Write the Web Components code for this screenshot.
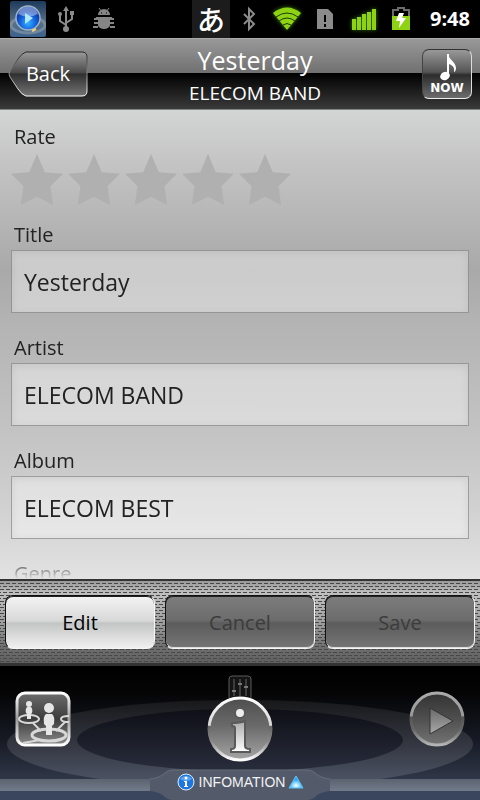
<!DOCTYPE html>
<html lang="en">
<head>
<meta charset="utf-8">
<meta name="viewport" content="width=device-width, initial-scale=1">
<title>Track information</title>
<style>
  html,
  body {
    height: 100%;
    margin: 0;
  }

  body {
    display: flex;
    flex-direction: column;
    background: #000;
    color: #222;
    font-family: "Open Sans", "Noto Sans", "Noto Sans CJK JP", sans-serif;
  }

  track-form {
    flex: 1;
    min-height: 0;
  }
</style>
</head>
<body>
  <status-bar time="9:48"></status-bar>
  <title-bar>
    <span slot="title">Yesterday</span>
    <span slot="subtitle">ELECOM BAND</span>
  </title-bar>
  <track-form>
    <star-rating max="5">Rate</star-rating>
    <text-field value="Yesterday">Title</text-field>
    <text-field value="ELECOM BAND">Artist</text-field>
    <text-field value="ELECOM BEST">Album</text-field>
    <text-field value="">Genre</text-field>
  </track-form>
  <action-bar>
    <push-button>Edit</push-button>
    <push-button disabled>Cancel</push-button>
    <push-button disabled>Save</push-button>
  </action-bar>
  <player-dock>INFOMATION</player-dock>

<script>
/**
 * Creates a template element from a string.
 *
 * @param {string} html - The markup and styles.
 * @returns {HTMLTemplateElement} - The template.
 */
const createTemplate = (html) => {
  const template = document.createElement('template')
  template.innerHTML = html
  return template
}

const statusTemplate = createTemplate(`
  <div class="group">
    <svg width="36" height="36" viewBox="0 0 36 36">
      <defs>
        <linearGradient id="tile" x2="0" y2="1"><stop stop-color="#1d3a5c"/><stop offset=".6" stop-color="#5a7186"/><stop offset="1" stop-color="#39618c"/></linearGradient>
        <radialGradient id="ball" cx=".5" cy=".7"><stop stop-color="#35b4ff"/><stop offset=".6" stop-color="#1668e0"/><stop offset="1" stop-color="#0d3fae"/></radialGradient>
      </defs>
      <rect width="36" height="36" rx="2" fill="url(#tile)"/>
      <ellipse cx="18" cy="24" rx="17" ry="8" fill="none" stroke="#9aa8b2" stroke-width="3" opacity=".5"/>
      <circle cx="18" cy="17" r="12" fill="url(#ball)" stroke="#9db4c8" stroke-width="1.500"/>
      <path d="M8 13a10.500 10.500 0 0 1 20 0q-10 5-20 0z" fill="#fff" opacity=".4"/>
      <path d="M15 12l8 5-8 6z" fill="#b4e6ff"/>
      <path d="M22 30l4-2" stroke="#f0cf80" stroke-width="2"/>
    </svg>
    <svg width="32" height="32" viewBox="0 0 32 32" fill="none" stroke="#8b8b8b" stroke-width="2">
      <path d="M16 6v20M16 22l-6-4v-6M16 20l6-4v-5"/>
      <g fill="#8b8b8b" stroke="none"><path d="M16 3l3 5h-6z"/><circle cx="16" cy="26" r="3"/><circle cx="10" cy="11" r="2"/><path d="M20 8h4v4h-4z"/></g>
    </svg>
    <svg width="36" height="32" viewBox="0 0 36 32" fill="#858585">
      <path d="M12 12a6 6 0 0 1 12 0z"/>
      <path d="M13 5l3 4M23 5l-3 4" stroke="#858585"/>
      <path d="M8 16h3v-2M8 20h4M8 25v-1h4M28 16h-3v-2M28 20h-4M28 25v-1h-4" fill="none" stroke="#858585" stroke-width="2"/>
      <path d="M12 14h12v8a6 4 0 0 1-12 0z"/>
      <path d="M15 10h1M20 10h1" stroke="#000"/>
    </svg>
  </div>
  <div class="group">
    <span class="ime" lang="ja">あ</span>
    <svg width="30" height="32" viewBox="0 0 30 32" fill="none" stroke="#8b8b8b" stroke-width="2"><path d="M10 11l10 10-5 5V6l5 5-10 10"/></svg>
    <svg class="glow" width="38" height="32" viewBox="0 0 38 32">
      <path d="M19 27L5 10q14-11 28 0z" fill="#8ed313"/>
      <path d="M8 14q11-8 22 0M11 18q8-6 16 0M15 22q4-3 8 0" fill="none" stroke="#1e3605"/>
    </svg>
    <svg width="30" height="32" viewBox="0 0 30 32"><path d="M7 6h11l5 5v15H7z" fill="#8b8b8b"/><path d="M15 12v7M15 21v3" stroke="#000" stroke-width="2"/></svg>
    <svg class="glow" width="40" height="32" viewBox="0 0 40 32" fill="#8ed313"><path d="M8 16h4v11H8zM13 14h4v13h-4zM18 11h4v16h-4zM23 9h4v18h-4zM28 6h4v21h-4z"/></svg>
    <svg width="26" height="32" viewBox="0 0 26 32">
      <path d="M5 14V7h5V5h6v2h5v7" fill="none" stroke="#6b6b6b" stroke-width="2"/>
      <path d="M4 13h18v14H4z" fill="#8ed313"/>
      <path d="M11 10h5l-2 5h4l-7 10 1-7H8z" fill="#fff"/>
    </svg>
    <time></time>
  </div>
  <style>
    :host {
      display: flex;
      justify-content: space-between;
      height: 38px;
      padding: 0 10px;
      background: #000;
      color: #fff;
    }

    .group {
      display: flex;
      align-items: center;
      gap: 4px;
    }

    .ime {
      width: 38px;
      background: #1c1c1c;
      font: 500 28px/38px "Noto Sans CJK JP", sans-serif;
      text-align: center;
    }

    .glow {
      filter: drop-shadow(0 0 2px #3d7a00);
    }

    time {
      min-width: 52px;
      font-size: 20px;
      font-weight: bold;
      line-height: 38px;
      text-align: right;
    }
  </style>
`)

// Define the custom element.
customElements.define('status-bar',
/** Status bar class with system icons and the clock. */
  class extends HTMLElement {
    /**
     * Constructor that attaches the shadow root.
     */
    constructor () {
      super()
      this.attachShadow({ mode: 'open' })
      this.shadowRoot.appendChild(statusTemplate.content.cloneNode(true))
      this.shadowRoot.querySelector('time').textContent = this.getAttribute('time')
    }
  })

const titleTemplate = createTemplate(`
  <button class="back" type="button">
    <svg viewBox="0 0 80 46" width="80" height="46" aria-hidden="true">
      <defs>
        <linearGradient id="face" x2="0" y2="1"><stop stop-color="#9a9a9a"/><stop offset=".47" stop-color="#4a4a4a"/><stop offset=".5" stop-color="#303030"/><stop offset="1" stop-color="#747474"/></linearGradient>
        <linearGradient id="edge" x2="0" y2="1"><stop stop-color="#222"/><stop offset=".4" stop-color="#777"/><stop offset="1" stop-color="#fff"/></linearGradient>
      </defs>
      <path d="M18 1h56q5 0 5 5v34q0 5-5 5H18q-4-1-8-7L2 26q-2-3 0-6l8-12q4-6 8-7z" fill="url(#face)" stroke="url(#edge)"/>
    </svg>
    <span>Back</span>
  </button>
  <div class="heading">
    <h1><slot name="title"></slot></h1>
    <p><slot name="subtitle"></slot></p>
  </div>
  <button class="now" type="button">
    <svg viewBox="0 0 30 28" width="30" height="28" aria-hidden="true">
      <path d="M16 1c1 6 8 8 8 14 0 2-1 4-2 4 1-5-2-7-5-8v11z" fill="#fff"/>
      <path d="M16 1v21" stroke="#fff" stroke-width="2"/>
      <ellipse cx="13" cy="23" rx="5" ry="4" transform="rotate(-25 13 23)" fill="#fff"/>
    </svg>
    <span>NOW</span>
  </button>
  <style>
    :host {
      display: flex;
      align-items: center;
      height: 70px;
      padding: 0 8px;
      border-top: 1px solid #aaa;
      border-bottom: 1px solid #7e8282;
      background: linear-gradient(#999, #707070 34px, #000 34px, #0a0a0a 40px, #3a3a3a);
      color: #fff;
    }

    button {
      border: 0;
      padding: 0;
      color: inherit;
      font-family: inherit;
    }

    .back {
      display: grid;
      background: none;
      font-size: 20px;
      line-height: 46px;
    }

    .back > * {
      grid-area: 1 / 1;
    }

    .back span {
      text-align: center;
    }

    .heading {
      display: flex;
      flex: 1;
      flex-direction: column;
      gap: 2px;
      padding-top: 2px;
      text-align: center;
    }

    h1,
    p {
      margin: 0;
      font-weight: normal;
    }

    h1 {
      font-size: 25px;
      line-height: 34px;
    }

    p {
      font-size: 19px;
      line-height: 28px;
    }

    .now {
      display: flex;
      flex-direction: column;
      align-items: center;
      justify-content: center;
      width: 50px;
      height: 50px;
      border: 1px solid #ccc;
      border-color: #333 #ddd #eee #444;
      border-radius: 7px;
      background: linear-gradient(#999, #555 22px, #2c2c2c 25px, #6c6c6c);
      font: bold 12px/14px "DejaVu Sans", sans-serif;
    }
  </style>
`)

customElements.define('title-bar',
/** Title bar class with the back and now playing buttons. */
  class extends HTMLElement {
    /**
     * Constructor that attaches the shadow root.
     */
    constructor () {
      super()
      this.attachShadow({ mode: 'open' })
      this.shadowRoot.appendChild(titleTemplate.content.cloneNode(true))
    }
  })

const formTemplate = createTemplate(`
  <form><slot></slot></form>
  <style>
    :host {
      display: block;
      background: linear-gradient(#d3d5d4, #c3c3c3 12%, #b5b5b5 24%, #a9a9a9 34%, #b4b4b4 46%, #c2c2c2 67%, #d0d0d0 84%, #e2e2e2);
    }

    form {
      box-sizing: border-box;
      height: 100%;
      overflow: hidden;
      padding: 14px 11px 0;
      -webkit-mask-image: linear-gradient(to top, transparent, #000 22px);
      mask-image: linear-gradient(to top, transparent, #000 22px);
    }
  </style>
`)

customElements.define('track-form',
/** Form class that fades its fields out at the lower edge. */
  class extends HTMLElement {
    /**
     * Constructor that attaches the shadow root.
     */
    constructor () {
      super()
      this.attachShadow({ mode: 'open' })
      this.shadowRoot.appendChild(formTemplate.content.cloneNode(true))
    }
  })

const ratingTemplate = createTemplate(`
  <fieldset>
    <legend><slot></slot></legend>
    <div id="stars"></div>
  </fieldset>
  <style>
    :host {
      display: block;
      margin-bottom: 16px;
    }

    fieldset {
      min-width: 0;
      margin: 0;
      padding: 0;
      border: 0;
    }

    legend {
      padding: 0 3px;
      font-size: 20px;
      line-height: 26px;
    }

    #stars {
      display: flex;
      gap: 5px;
      padding-top: 4px;
    }

    input {
      appearance: none;
      width: 52px;
      height: 52px;
      margin: 0;
      background: #b0b0b0;
      clip-path: polygon(50% 0, 65% 35%, 100% 38%, 76% 62%, 81% 98%, 50% 82%, 19% 98%, 24% 62%, 0 38%, 35% 35%);
    }
  </style>
`)

customElements.define('star-rating',
/** Star rating class. */
  class extends HTMLElement {
    /**
     * Constructor that creates one radio button for each star.
     */
    constructor () {
      super()
      this.attachShadow({ mode: 'open' })
      this.shadowRoot.appendChild(ratingTemplate.content.cloneNode(true))

      const stars = this.shadowRoot.querySelector('#stars')
      for (let i = 1; i <= Number(this.getAttribute('max')); i++) {
        const star = document.createElement('input')
        star.type = 'radio'
        star.name = 'rate'
        star.value = i
        star.setAttribute('aria-label', `${i}`)
        stars.appendChild(star)
      }
    }
  })

const fieldTemplate = createTemplate(`
  <label for="field"><slot></slot></label>
  <input id="field" type="text" readonly>
  <style>
    :host {
      display: flex;
      flex-direction: column;
      gap: 2px;
      margin-bottom: 22px;
    }

    label {
      padding-left: 3px;
      font-size: 20px;
      line-height: 26px;
    }

    input {
      box-sizing: border-box;
      width: 100%;
      height: 63px;
      padding: 0 12px;
      border: 1px solid rgba(90, 90, 90, .5);
      border-radius: 0;
      outline: 0;
      background: rgba(255, 255, 255, .4);
      box-shadow: inset 0 2px 8px rgba(0, 0, 0, .08);
      color: inherit;
      font: 23px "Open Sans", "Noto Sans", sans-serif;
    }
  </style>
`)

customElements.define('text-field',
/** Labelled text field class. */
  class extends HTMLElement {
    /**
     * Constructor that copies the value to the input.
     */
    constructor () {
      super()
      this.attachShadow({ mode: 'open' })
      this.shadowRoot.appendChild(fieldTemplate.content.cloneNode(true))
      this.shadowRoot.querySelector('#field').value = this.getAttribute('value')
    }
  })

const barTemplate = createTemplate(`
  <slot></slot>
  <style>
    /* Two layers of dashes, 4px by 1px, each row shifted by half a step. */
    :host {
      display: grid;
      grid-template-columns: repeat(3, 1fr);
      gap: 10px;
      padding: 14px 5px;
      border-top: 2px solid #333;
      border-bottom: 2px solid #333;
      background:
        conic-gradient(at 4px 1px, transparent 270deg, #484848 0) 0 2px / 6px 6px,
        conic-gradient(at 4px 1px, transparent 270deg, #484848 0) 3px 5px / 6px 6px,
        linear-gradient(#999, #c0c0c0 12px, #a0a0a0 50%, #707070 80%, #606060);
    }
  </style>
`)

customElements.define('action-bar',
/** Action bar class. */
  class extends HTMLElement {
    /**
     * Constructor that attaches the shadow root.
     */
    constructor () {
      super()
      this.attachShadow({ mode: 'open' })
      this.shadowRoot.appendChild(barTemplate.content.cloneNode(true))
    }
  })

const buttonTemplate = createTemplate(`
  <button type="button"><slot></slot></button>
  <style>
    :host {
      display: block;
    }

    button {
      display: block;
      width: 100%;
      height: 54px;
      padding: 0;
      border: 1px solid;
      border-color: #111 #f5f5f5 #f5f5f5 #111;
      border-radius: 8px;
      background: linear-gradient(#f4f4f4, #d8d8d8 48%, #c3c5c4 52%, #f0f0f0);
      box-shadow: inset 0 1px #222;
      color: #000;
      font-family: inherit;
      font-size: 20px;
    }

    button:disabled {
      background: linear-gradient(#7d7d7d, #6c6c6c 47%, #5c5c5c 52%, #757575);
      box-shadow: inset 0 1px #222, inset 0 -1px #ddd;
      color: #3c3c3c;
    }
  </style>
`)

customElements.define('push-button',
/** Push button class. */
  class extends HTMLElement {
    /**
     * Constructor that passes the disabled state on.
     */
    constructor () {
      super()
      this.attachShadow({ mode: 'open' })
      this.shadowRoot.appendChild(buttonTemplate.content.cloneNode(true))
      this.shadowRoot.querySelector('button').disabled = this.hasAttribute('disabled')
    }
  })

const dockTemplate = createTemplate(`
  <svg class="scene" viewBox="0 0 480 134" preserveAspectRatio="none" aria-hidden="true">
    <defs>
      <linearGradient id="sky" x2="0" y2="1"><stop stop-color="#000"/><stop offset=".2" stop-color="#050506"/><stop offset=".55" stop-color="#171a25"/><stop offset=".85" stop-color="#303748"/><stop offset="1" stop-color="#38445c"/></linearGradient>
      <linearGradient id="ring" x2="0" y2="1"><stop stop-color="#18181a"/><stop offset=".5" stop-color="#343741"/><stop offset="1" stop-color="#50586a"/></linearGradient>
      <linearGradient id="hole" x2="0" y2="1"><stop stop-color="#0e0f16"/><stop offset="1" stop-color="#292e3d"/></linearGradient>
      <linearGradient id="strip" x2="0" y2="1"><stop stop-color="#5b6370"/><stop offset="1" stop-color="#727b8a"/></linearGradient>
    </defs>
    <path d="M0 0h480v134H0z" fill="url(#sky)"/>
    <ellipse cx="240" cy="78" rx="233" ry="44" fill="url(#ring)"/>
    <ellipse cx="240" cy="74" rx="163" ry="31" fill="url(#hole)"/>
    <path d="M0 113h480v12H0z" fill="url(#strip)"/>
    <path d="M0 125h480v9H0z" fill="#3a465e"/>
    <path d="M150 113q10-1 15-6 3-3 8-3h134q5 0 8 3 5 5 15 6v12q-10 1-15 6-3 3-8 3H173q-5 0-8-3-5-5-15-6z" fill="#535a69"/>
    <path d="M150 113q10-1 15-6 3-3 8-3h134q5 0 8 3 5 5 15 6" fill="none" stroke="#666d7a"/>
  </svg>
  <div class="controls">
    <button class="side" type="button" aria-label="Map">
      <svg width="56" height="56" viewBox="0 0 56 56">
        <defs>
          <linearGradient id="pane" x2="0" y2="1"><stop stop-color="#6c6c6c"/><stop offset=".5" stop-color="#3c3c3c"/><stop offset="1" stop-color="#8a8a8a"/></linearGradient>
          <linearGradient id="rim" x2="0" y2="1"><stop stop-color="#fff"/><stop offset=".5" stop-color="#9a9a9a"/><stop offset="1" stop-color="#fff"/></linearGradient>
        </defs>
        <rect x="2" y="2" width="52" height="52" rx="8" fill="url(#pane)" stroke="url(#rim)" stroke-width="3"/>
        <g fill="none" stroke="#d8d8d8" stroke-width="2">
          <ellipse cx="14" cy="28" rx="10" ry="4"/>
          <ellipse cx="34" cy="44" rx="17" ry="6" stroke-width="3"/>
          <path d="M54 25q-8 0-8 3t8 3M18 32l8 8M50 31l-9 9M25 49l-17 3"/>
        </g>
        <g fill="#e6e6e6">
          <circle cx="14" cy="13" r="3"/>
          <path d="M12 16h4q2 2 1 6l-1 1v5h-4v-5l-1-1q-1-4 1-6z"/>
          <circle cx="34" cy="17" r="5"/>
          <path d="M31 23h6q3 2 2 10l-2 2v9h-6v-9l-2-2q-1-8 2-10z"/>
        </g>
      </svg>
    </button>
    <div class="middle">
      <button type="button" aria-label="Equalizer">
        <svg width="24" height="24" viewBox="0 0 24 24">
          <rect x="1" y="1" width="22" height="24" rx="3" fill="#141414" stroke="#5a5a5a"/>
          <path d="M6 4v17M12 4v17M18 4v17" stroke="#666"/>
          <path d="M4 16h4M10 9h4M16 12h4" stroke="#777" stroke-width="2"/>
        </svg>
      </button>
      <button type="button" aria-label="Information">
        <svg width="66" height="66" viewBox="0 0 66 66">
          <defs>
            <linearGradient id="disc" x2="0" y2="1"><stop stop-color="#4e4e4e"/><stop offset=".45" stop-color="#6a6a6a"/><stop offset="1" stop-color="#a5a5a5"/></linearGradient>
            <linearGradient id="halo" x2="0" y2="1"><stop stop-color="#fff"/><stop offset=".44" stop-color="#d5d5d5"/><stop offset=".46" stop-color="#666"/><stop offset=".7" stop-color="#888"/><stop offset="1" stop-color="#fff"/></linearGradient>
            <linearGradient id="letter" x2="0" y2="1"><stop stop-color="#aaa"/><stop offset="1" stop-color="#fff"/></linearGradient>
          </defs>
          <circle cx="33" cy="33" r="31" fill="url(#disc)" stroke="url(#halo)" stroke-width="3"/>
          <g stroke="#5a5a5a" stroke-width="2">
            <circle cx="33" cy="17" r="5" fill="#eee"/>
            <path d="M25 27q8 0 13-2v25q0 3 5 3v3H24v-3q4 0 4-3V32q0-2-3-2z" fill="url(#letter)"/>
          </g>
        </svg>
      </button>
    </div>
    <button class="side" type="button" aria-label="Play">
      <svg width="56" height="56" viewBox="0 0 56 56">
        <defs>
          <linearGradient id="plate" x2="0" y2="1"><stop stop-color="#333"/><stop offset=".45" stop-color="#4c4c4c"/><stop offset="1" stop-color="#747474"/></linearGradient>
          <linearGradient id="bevel" x2="0" y2="1"><stop stop-color="#aaa"/><stop offset=".44" stop-color="#999"/><stop offset=".46" stop-color="#555"/><stop offset=".7" stop-color="#666"/><stop offset="1" stop-color="#b5b5b5"/></linearGradient>
          <linearGradient id="arrow" x2="0" y2="1"><stop stop-color="#686868"/><stop offset="1" stop-color="#aaa"/></linearGradient>
        </defs>
        <circle cx="28" cy="28" r="26" fill="url(#plate)" stroke="url(#bevel)" stroke-width="3"/>
        <path d="M21 17l23 13-23 13z" fill="url(#arrow)" stroke="#333"/>
      </svg>
    </button>
  </div>
  <button class="tab" type="button">
    <svg width="20" height="20" viewBox="0 0 20 20" aria-hidden="true">
      <circle cx="10" cy="10" r="8" fill="#1c78e0" stroke="#e2eefc"/>
      <path d="M4 7a7 6 0 0 1 12 0q-6 4-12 0z" fill="#5ba1f0"/>
      <circle cx="10" cy="6" r="1.500" fill="#fff"/>
      <path d="M8 9h3v5h1v1H8v-1h1v-4H8z" fill="#fff"/>
    </svg>
    <slot></slot>
    <svg width="16" height="16" viewBox="0 0 16 16" aria-hidden="true">
      <defs><radialGradient id="tip" cx=".5" cy=".8"><stop stop-color="#fff"/><stop offset=".5" stop-color="#8ad8ff"/><stop offset="1" stop-color="#2aa5f0"/></radialGradient></defs>
      <path d="M8 2l7 12H1z" fill="url(#tip)" stroke="#5fc4fa"/>
    </svg>
  </button>
  <style>
    :host {
      display: flex;
      flex-direction: column;
      position: relative;
      padding-bottom: 4px;
      border-top: 1px solid #333;
      color: #f2f2f2;
    }

    .scene {
      position: absolute;
      inset: 0;
      width: 100%;
      height: 100%;
    }

    .controls {
      display: flex;
      justify-content: space-between;
      align-items: flex-start;
      position: relative;
      padding: 9px 15px 6px;
    }

    .middle {
      display: flex;
      flex-direction: column;
      align-items: center;
    }

    button {
      display: block;
      padding: 0;
      border: 0;
      background: none;
      color: inherit;
    }

    button svg {
      display: block;
    }

    .middle button + button {
      margin-top: -3px;
    }

    .side {
      padding-top: 16px;
    }

    .tab {
      display: flex;
      align-items: center;
      gap: 3px;
      position: relative;
      align-self: center;
      height: 28px;
      font: 14px "Liberation Sans", Arial, sans-serif;
    }
  </style>
`)

customElements.define('player-dock',
/** Player dock class with the view buttons and the information tab. */
  class extends HTMLElement {
    /**
     * Constructor that attaches the shadow root.
     */
    constructor () {
      super()
      this.attachShadow({ mode: 'open' })
      this.shadowRoot.appendChild(dockTemplate.content.cloneNode(true))
    }
  })
</script>
</body>
</html>
